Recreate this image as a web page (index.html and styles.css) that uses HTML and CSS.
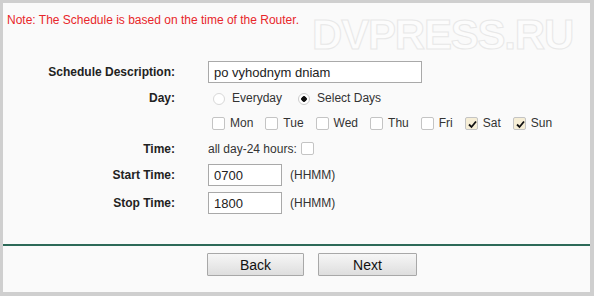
FILE: index.html
```html
<!DOCTYPE html>
<html lang="en">
<head>
    <meta charset="utf-8">
    <title>Schedule Settings</title>
    <link rel="stylesheet" href="styles.css">
</head>
<body>
<div class="frame">
    <p class="note">Note: The Schedule is based on the time of the Router.</p>
    <div class="watermark">DVPRESS.RU</div>
    <form class="schedule-form">
        <label class="field-label" for="desc">Schedule Description:</label>
        <div class="field"><input class="text-input wide" type="text" id="desc" value="po vyhodnym dniam"></div>

        <span class="field-label">Day:</span>
        <div class="field">
            <input class="radio" type="radio" name="day" id="everyday"><label class="opt" for="everyday">Everyday</label>
            <input class="radio" type="radio" name="day" id="select" checked><label class="opt" for="select">Select Days</label>
        </div>

        <span class="field-label"></span>
        <div class="field days">
            <input class="check" type="checkbox" id="mon"><label class="opt" for="mon">Mon</label>
            <input class="check" type="checkbox" id="tue"><label class="opt" for="tue">Tue</label>
            <input class="check" type="checkbox" id="wed"><label class="opt" for="wed">Wed</label>
            <input class="check" type="checkbox" id="thu"><label class="opt" for="thu">Thu</label>
            <input class="check" type="checkbox" id="fri"><label class="opt" for="fri">Fri</label>
            <input class="check" type="checkbox" id="sat" checked><label class="opt" for="sat">Sat</label>
            <input class="check" type="checkbox" id="sun" checked><label class="opt" for="sun">Sun</label>
        </div>

        <span class="field-label">Time:</span>
        <div class="field">
            <label class="plain" for="allday">all day-24 hours:</label>
            <input class="check" type="checkbox" id="allday">
        </div>

        <label class="field-label" for="start">Start Time:</label>
        <div class="field"><input class="text-input short" type="text" id="start" value="0700"><span class="hint">(HHMM)</span></div>

        <label class="field-label" for="stop">Stop Time:</label>
        <div class="field"><input class="text-input short" type="text" id="stop" value="1800"><span class="hint">(HHMM)</span></div>
    </form>
    <div class="divider"></div>
    <div class="buttons">
        <button class="btn" type="button">Back</button>
        <button class="btn" type="button">Next</button>
    </div>
</div>
</body>
</html>
```

FILE: styles.css
```css
* {
    box-sizing: border-box;
    font-family: Arial, "Liberation Sans", sans-serif;
}

html, body {
    margin: 0;
    height: 100%;
}

body {
    background-color: #cfcfcf;
}

.frame {
    position: relative;
    height: 296px;
    border-top: 3px solid #cfcfcf;
    border-left: 3px solid #cfcfcf;
    border-right: 4px solid #cfcfcf;
    border-bottom: 4px solid #cfcfcf;
    background-color: #fafafa;
}

.note {
    margin: 0;
    padding: 10px 0 0 4px;
    height: 56px;
    font-size: 12px;
    line-height: 14px;
    color: #e8262a;
}

.watermark {
    position: absolute;
    top: 8px;
    left: 309px;
    font-size: 42px;
    font-weight: bold;
    letter-spacing: -1.2px;
    color: #fcfcfc;
    -webkit-text-stroke: 1px #e8e8e8;
}

.schedule-form {
    display: grid;
    grid-template-columns: 172px 1fr;
    grid-template-rows: 26px 25px 26px 25px 28px 28px;
    column-gap: 33px;
    font-size: 12px;
    color: #333;
}

.field-label {
    display: flex;
    align-items: center;
    justify-content: flex-end;
    font-weight: bold;
    color: #222;
}

.field {
    display: flex;
    align-items: center;
}

.text-input {
    height: 22px;
    border: 1px solid #a9a9a9;
    background-color: #fff;
    padding: 0 5px;
    font-size: 13px;
    color: #222;
}

.wide {
    width: 214px;
}

.short {
    width: 74px;
}

.hint {
    margin-left: 8px;
    color: #333;
}

.radio {
    appearance: none;
    width: 12px;
    height: 12px;
    margin: 2px 7px 0 5px;
    border: 1px solid #d8d8d8;
    border-radius: 50%;
    background-color: #fff;
}

.radio:checked {
    background: radial-gradient(circle, #111 0 2.5px, #fff 3px);
    border-color: #ccc;
}

.radio + .opt {
    margin-right: 11px;
}

.check {
    appearance: none;
    width: 13px;
    height: 13px;
    margin: 0 6px 0 4px;
    border: 1px solid #c4c4c4;
    border-radius: 2px;
    background-color: #fff;
}

.check:checked {
    background-color: #f6eed6;
    background-image: url("data:image/svg+xml,%3Csvg xmlns='http://www.w3.org/2000/svg' viewBox='0 0 13 13'%3E%3Cpath d='M3 6.5 L5.5 9 L10 3.5' fill='none' stroke='%23111' stroke-width='1.8'/%3E%3C/svg%3E");
    background-size: 13px 13px;
}

.days .check {
    margin-left: 4px;
    margin-right: 5px;
}

.days .opt {
    margin-right: 8px;
}

.plain {
    margin-right: 0;
}

.divider {
    margin-top: 27px;
    height: 2px;
    background-color: #2d6a58;
}

.buttons {
    display: flex;
    gap: 14px;
    padding-top: 7px;
    padding-left: 204px;
}

.btn {
    width: 97px;
    height: 23px;
    border: 1px solid #a8a8a8;
    border-radius: 1px;
    background: linear-gradient(#f6f6f6, #dedede);
    font-size: 14px;
    color: #111;
}

.btn + .btn {
    width: 99px;
}
```
